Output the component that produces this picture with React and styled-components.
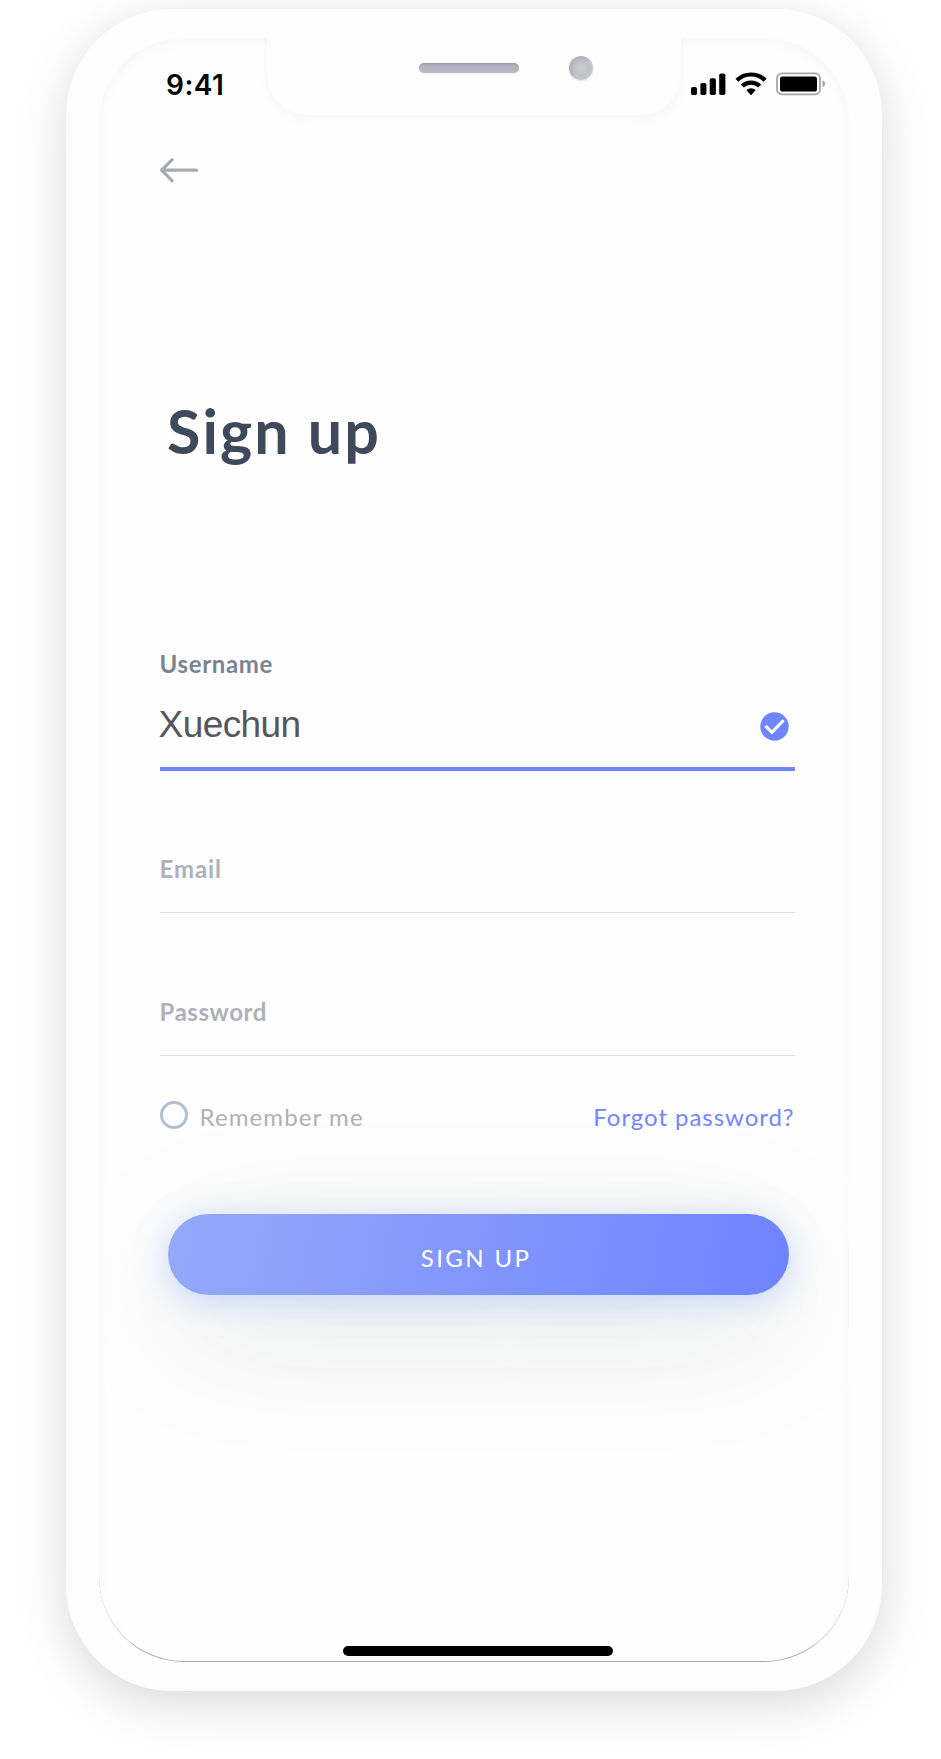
import React from "react";
import styled, { createGlobalStyle } from "styled-components";

const GlobalStyle = createGlobalStyle`
  *, *::before, *::after { box-sizing: border-box; }
  body { margin: 0; background: #fff; }
  button, input { font: inherit; }
`;

const rounded = `Lato, "Open Sans", sans-serif`;

const Page = styled.main`
  height: 1759px;
  padding: 9px 59px 0 66px;
  overflow: hidden;
  background: #fff;
  font-family: ${rounded};
`;

const Phone = styled.div`
  height: 1682px;
  padding: 29px 33px;
  border-radius: 106px;
  background: #fefefe;
  box-shadow: 0 13px 50px rgba(0, 0, 0, 0.15);
`;

const Screen = styled.section`
  position: relative;
  height: 1624px;
  overflow: hidden;
  display: flex;
  flex-direction: column;
  border-radius: 85px;
  border-bottom: 1px solid #aaa8aa;
  background: #fefefe;
  box-shadow: inset 0 4px 12px rgba(0, 0, 0, 0.03);
`;

const Notch = styled.div`
  position: absolute;
  top: -12px;
  left: 168px;
  width: 414px;
  height: 89px;
  padding: 12px 88px 0 152px;
  display: flex;
  align-items: flex-start;
  justify-content: space-between;
  border-radius: 0 0 40px 40px;
  background: #fefefe;
  box-shadow: 0 4px 12px rgba(0, 0, 0, 0.03);
`;

const Speaker = styled.span`
  width: 100px;
  height: 10px;
  margin-top: 25px;
  border-radius: 5px;
  background: linear-gradient(#aeacb7, #bfbccb);
  box-shadow: 0 1px 2px rgba(0, 0, 0, 0.08), inset 0 1px 2px rgba(90, 90, 100, 0.25);
`;

const Camera = styled.span`
  width: 24px;
  height: 24px;
  margin-top: 18px;
  border-radius: 50%;
  border: 3px solid #c4c4cc;
  border-top-color: #b5b4bc;
  border-left-color: #b5b4bc;
  background: radial-gradient(#cbcbd4, #bbbbc5);
  box-shadow: 0 1px 2px rgba(0, 0, 0, 0.1);
`;

const StatusBar = styled.div`
  height: 94px;
  padding: 31px 22px 0 67px;
  display: flex;
  justify-content: space-between;
  align-items: flex-start;
`;

const Clock = styled.span`
  font: 600 28px/32px Inter, "Liberation Sans", sans-serif;
  letter-spacing: 0.5px;
  color: #000;
`;

const StatusIcons = styled.svg`
  width: 136px;
  height: 26px;
  margin-top: 3px;
`;

const BackButton = styled.button`
  width: 40px;
  height: 28px;
  margin: 24px 0 0 60px;
  padding: 0;
  border: 0;
  background: none;
  svg { display: block; }
`;

const Title = styled.h1`
  margin: 211px 0 0 68px;
  font-size: 61px;
  line-height: 72px;
  font-weight: 700;
  letter-spacing: 2.1px;
  color: #3e4a5b;
`;

const Form = styled.form`
  margin: 182px 54.5px 0 60.6px;
  display: flex;
  flex-direction: column;
`;

const Field = styled.label`
  height: ${(p) => p.$height}px;
  display: flex;
  flex-direction: column;
  justify-content: ${(p) => (p.$active ? "space-between" : "flex-end")};
  padding-bottom: ${(p) => (p.$active ? 20 : 28)}px;
  border-bottom: ${(p) => (p.$active ? "4px solid #6e85ff" : "1px solid #d6e3ef")};
`;

const FieldLabel = styled.span`
  font-size: 24px;
  line-height: 30px;
  font-weight: 700;
  letter-spacing: ${(p) => p.$spacing}px;
  color: ${(p) => (p.$active ? "#7a8490" : "#adb1b8")};
`;

const FieldValue = styled.span`
  display: flex;
  justify-content: space-between;
  align-items: center;
  height: 44px;
  margin-left: -1px;
  padding-right: 6px;
  font: 400 37px/42px "Liberation Sans", Arial, sans-serif;
  letter-spacing: -0.6px;
  color: #56565a;
  svg { margin-top: 3px; }
`;

const Options = styled.div`
  height: 30px;
  margin-top: 45px;
  display: flex;
  align-items: center;
  justify-content: space-between;
  font-size: 24px;
  line-height: 30px;
`;

const Remember = styled.label`
  display: flex;
  align-items: center;
  gap: 12px;
  letter-spacing: 1.1px;
  color: #adb1b8;
`;

const Radio = styled.span`
  width: 28px;
  height: 28px;
  margin-bottom: 2px;
  border: 3px solid #b0c0d4;
  border-radius: 50%;
`;

const OptionText = styled.span`
  padding-top: 2px;
`;

const ForgotLink = styled.a`
  padding-top: 2px;
  letter-spacing: 0.95px;
  color: #7187ff;
`;

const SubmitButton = styled.button`
  height: 81px;
  margin: 83px 6px 0 8px;
  padding: 5px 4px 0 0;
  border: 0;
  border-radius: 41px;
  background: linear-gradient(100deg, #95a9f9, #6e83ff);
  box-shadow: 0 6px 34px rgba(110, 160, 255, 0.36), 0 32px 140px rgba(20, 30, 30, 0.12);
  color: #fff;
  font-size: 24px;
  letter-spacing: 2.4px;
`;

const HomeIndicator = styled.div`
  width: 270px;
  height: 10px;
  margin: auto 0 5px 244px;
  border-radius: 5px;
  background: #000;
`;

const StatusGlyphs = () => (
  <StatusIcons viewBox="0 0 136 26">
    <rect x="0" y="15" width="6" height="8" rx="1.7" />
    <rect x="9.4" y="11" width="6" height="12" rx="1.7" />
    <rect x="18.7" y="6.3" width="6.2" height="16.7" rx="1.7" />
    <rect x="28.2" y="1.6" width="6.2" height="21.4" rx="1.7" />
    <g fill="none" stroke="#000" strokeWidth="4.2">
      <path d="M45.9 8.3a20 20 0 0 1 28.2 0" />
      <path d="M51.3 14.1a12.4 12.4 0 0 1 17.4 0" />
    </g>
    <path d="M55.3 18.1a7 7 0 0 1 9.4 0l-4.1 4.6q-.6.6-1.2 0z" />
    <rect x="86" y="1.3" width="43" height="21" rx="5" fill="none" stroke="#a6a6a6" strokeWidth="1.8" />
    <rect x="89" y="4.6" width="37" height="15" rx="2.6" />
    <path d="M131.5 8.2q2.8 1 2.8 3.6t-2.8 3.6z" fill="#a6a6a6" />
  </StatusIcons>
);

const ArrowLeft = () => (
  <svg width="40" height="28" viewBox="0 0 40 28" fill="none" stroke="#a5aab4" strokeWidth="3.2" strokeLinecap="round" strokeLinejoin="round">
    <path d="M37.4 14.2H2.6M13.2 3.6L2.6 14.2l10.6 10.6" />
  </svg>
);

const CheckBadge = () => (
  <svg width="29" height="29" viewBox="0 0 29 29">
    <circle cx="14.5" cy="14.5" r="14.2" fill="#6e85ff" />
    <path d="M5.4 13.9l6.5 6.4L23.6 8.2" fill="none" stroke="#fff" strokeWidth="3" />
  </svg>
);

export default function App() {
  return (
    <>
      <GlobalStyle />
      <Page>
        <Phone>
          <Screen>
            <StatusBar>
              <Clock>9:41</Clock>
              <StatusGlyphs />
            </StatusBar>
            <Notch>
              <Speaker />
              <Camera />
            </Notch>
            <BackButton type="button" aria-label="Back">
              <ArrowLeft />
            </BackButton>
            <Title>Sign up</Title>
            <Form>
              <Field $active $height={122}>
                <FieldLabel $active $spacing={0.65}>Username</FieldLabel>
                <FieldValue>
                  Xuechun
                  <CheckBadge />
                </FieldValue>
              </Field>
              <Field $height={142}>
                <FieldLabel $spacing={0.9}>Email</FieldLabel>
              </Field>
              <Field $height={143}>
                <FieldLabel $spacing={0.55}>Password</FieldLabel>
              </Field>
              <Options>
                <Remember>
                  <Radio />
                  <OptionText>Remember me</OptionText>
                </Remember>
                <ForgotLink>Forgot password?</ForgotLink>
              </Options>
              <SubmitButton type="button">SIGN UP</SubmitButton>
            </Form>
            <HomeIndicator />
          </Screen>
        </Phone>
      </Page>
    </>
  );
}
